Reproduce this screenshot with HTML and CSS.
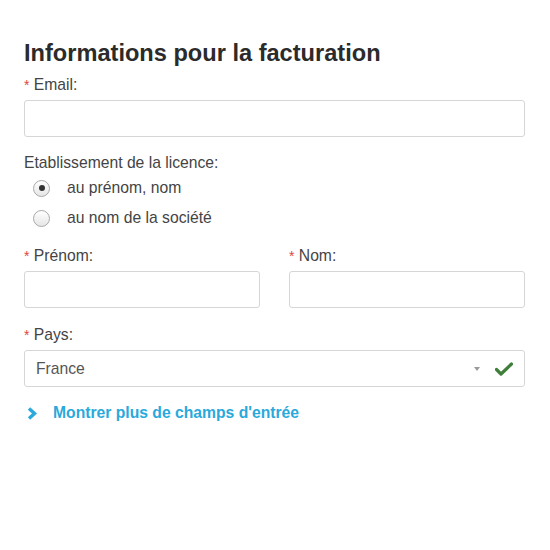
FILE: index.html
```html
<!DOCTYPE html>
<html lang="fr">
<head>
<meta charset="utf-8">
<link rel="stylesheet" href="styles.css">
</head>
<body>
<div class="page">
  <h1 class="title">Informations pour la facturation</h1>

  <div class="group">
    <div class="label"><span class="req">*</span> Email:</div>
    <div class="input"></div>
  </div>

  <div class="group radio-group">
    <div class="label">Etablissement de la licence:</div>
    <div class="radio-row"><span class="radio checked"><span class="dot"></span></span><span class="radio-text">au prénom, nom</span></div>
    <div class="radio-row"><span class="radio"></span><span class="radio-text">au nom de la société</span></div>
  </div>

  <div class="group cols">
    <div class="col">
      <div class="label"><span class="req">*</span> Prénom:</div>
      <div class="input"></div>
    </div>
    <div class="col">
      <div class="label"><span class="req">*</span> Nom:</div>
      <div class="input"></div>
    </div>
  </div>

  <div class="group">
    <div class="label"><span class="req">*</span> Pays:</div>
    <div class="input select">
      <span class="value">France</span>
      <span class="arrow"></span>
      <svg class="check" width="18" height="14" viewBox="0 0 18 14"><path d="M1.5 7.5 L6 12 L16.5 2" fill="none" stroke="#3f7f3a" stroke-width="3.2" stroke-linecap="round" stroke-linejoin="round"/></svg>
    </div>
  </div>

  <div class="more">
    <svg class="chev" width="11" height="13" viewBox="0 0 11 13"><path d="M2 1.5 L7.5 6.5 L2 11.5" fill="none" stroke="#2aa9db" stroke-width="3.4"/></svg>
    <span class="more-text">Montrer plus de champs d'entrée</span>
  </div>
</div>
</body>
</html>
```

FILE: styles.css
```css
html, body {
  margin: 0;
  padding: 0;
  background: #ffffff;
}
body {
  font-family: "Liberation Sans", Arial, sans-serif;
  color: #444;
  font-size: 15.7px;
}
.page {
  padding: 40px 25px 0 24px;
}
.title {
  margin: 0 0 9px 0;
  font-size: 23.6px;
  line-height: 26px;
  font-weight: bold;
  color: #2b2b2b;
}
.group {
  margin-bottom: 16px;
}
.label {
  line-height: 20px;
  height: 20px;
  color: #444;
  margin-bottom: 5px;
}
.req {
  color: #e0463c;
  font-size: 14px;
}
.input {
  height: 35px;
  border: 1px solid #d6d6d6;
  border-radius: 3px;
  background: #fff;
}
.radio-row {
  display: flex;
  align-items: center;
  height: 30px;
  padding-left: 9px;
}
.group .label + .radio-row {
  margin-top: -5px;
}
.radio {
  flex-shrink: 0;
  width: 17px;
  height: 17px;
  box-sizing: border-box;
  border: 1px solid #a9a9a9;
  border-radius: 50%;
  background: linear-gradient(#ffffff, #e6e6e6);
  display: flex;
  align-items: center;
  justify-content: center;
}
.dot {
  width: 6px;
  height: 6px;
  border-radius: 50%;
  background: #333;
}
.radio-text {
  margin-left: 17px;
  color: #444;
}
.group.radio-group {
  margin-bottom: 13px;
}
.cols {
  display: flex;
  gap: 29px;
}
.col {
  flex: 1;
}
.cols.group {
  margin-bottom: 17px;
}
.select {
  display: flex;
  align-items: center;
  padding: 0 11px;
}
.value {
  flex: 1;
  color: #555;
}
.arrow {
  width: 0;
  height: 0;
  border-left: 3px solid transparent;
  border-right: 3px solid transparent;
  border-top: 4px solid #999;
  margin-right: 15px;
}
.check {
  display: block;
}
.more {
  margin-top: 10px;
  display: flex;
  align-items: center;
  line-height: 20px;
  padding-left: 3px;
}
.chev {
  display: block;
}
.more-text {
  margin-left: 15px;
  color: #2aa9db;
  font-weight: bold;
}
```
